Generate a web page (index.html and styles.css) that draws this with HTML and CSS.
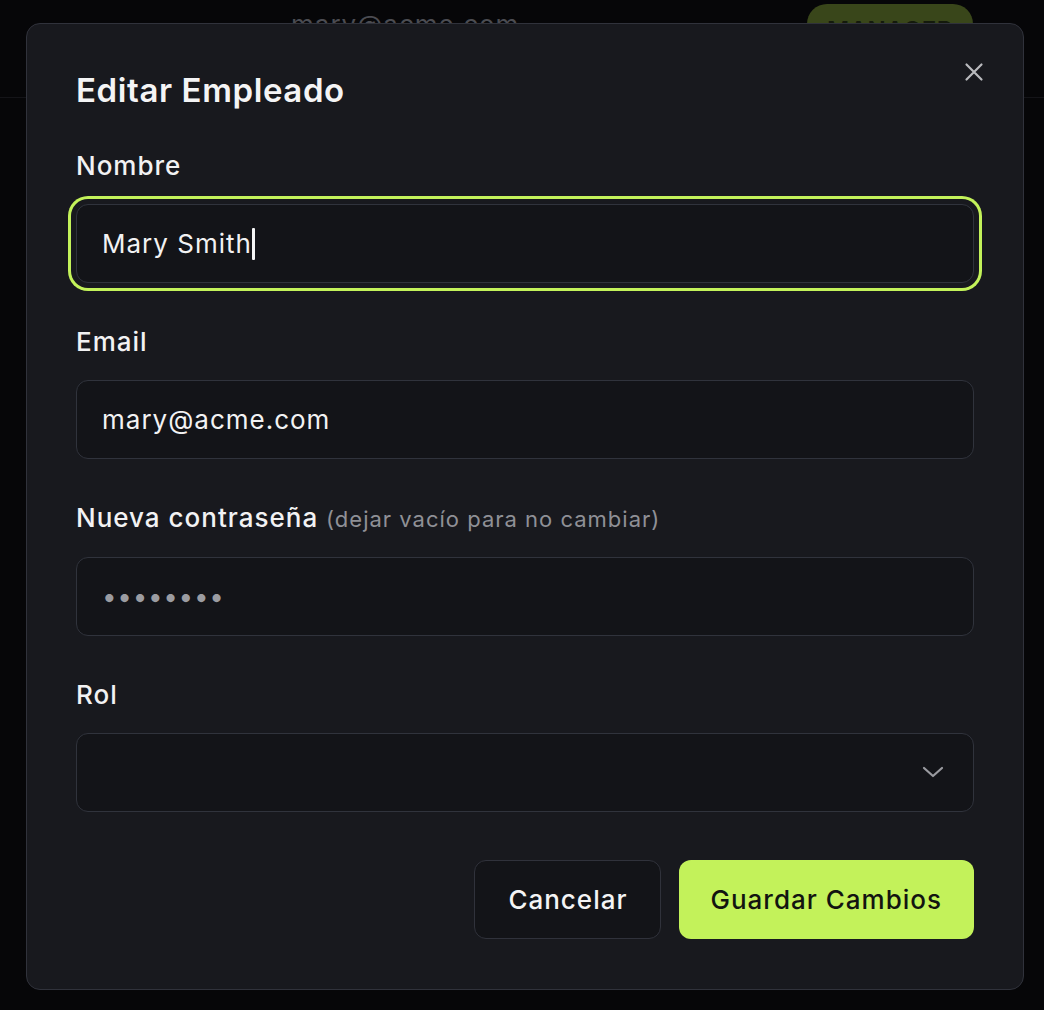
FILE: index.html
```html
<!DOCTYPE html>
<html lang="es">
<head>
<meta charset="UTF-8" />
<meta name="viewport" content="width=device-width, initial-scale=1" />
<title>Editar Empleado</title>
<link rel="stylesheet" href="styles.css">
</head>
<body>

<div class="page-behind">
  <div class="row">
    <span class="row-email">mary@acme.com</span>
    <span class="role-badge">MANAGER</span>
  </div>
</div>

<div class="overlay">
  <form class="modal" id="editForm">
    <button type="button" class="close-btn" aria-label="Cerrar">
      <svg width="24" height="24" viewBox="0 0 24 24" fill="none" stroke="currentColor" stroke-width="2.2" stroke-linecap="round">
        <path d="M4.5 4.5L19.5 19.5M19.5 4.5L4.5 19.5" />
      </svg>
    </button>

    <h1 class="modal-title">Editar Empleado</h1>

    <div class="field">
      <label for="name">Nombre</label>
      <div class="fake-input is-focused" id="name">Mary Smith<span class="caret"></span></div>
    </div>

    <div class="field">
      <label for="email">Email</label>
      <input type="email" id="email" value="mary@acme.com" />
    </div>

    <div class="field">
      <label for="password">Nueva contraseña <span class="hint">(dejar vacío para no cambiar)</span></label>
      <div class="fake-input password" id="password">••••••••</div>
    </div>

    <div class="field">
      <label for="role">Rol</label>
      <div class="select-wrap">
        <select id="role">
          <option value=""></option>
          <option value="employee">Empleado</option>
          <option value="manager">Manager</option>
        </select>
        <svg class="chevron" width="22" height="12" viewBox="0 0 22 12" fill="none" stroke="currentColor" stroke-width="2.2" stroke-linecap="round" stroke-linejoin="round">
          <path d="M2 2L11 10L20 2" />
        </svg>
      </div>
    </div>

    <div class="actions">
      <button type="button" class="btn btn-outline">Cancelar</button>
      <button type="submit" class="btn btn-primary">Guardar Cambios</button>
    </div>
  </form>
</div>

</body>
</html>
```

FILE: styles.css
```css
* {
  box-sizing: border-box;
}
body {
  margin: 0;
  background: #060608;
  font-family: Inter, "Noto Sans", Arial, sans-serif;
  color: #f2f2f3;
  width: 1044px;
  height: 1010px;
  overflow: hidden;
}

/* table behind the dialog */
.page-behind {
  height: 98px;
  border-bottom: 1px solid #141418;
}
.row {
  display: flex;
  align-items: center;
  padding-top: 3px;
}
.row-email {
  margin-left: 291px;
  font-size: 26px;
  letter-spacing: 1px;
  color: #4b4c52;
  line-height: 40px;
  padding-top: 2px;
}
.role-badge {
  margin-left: auto;
  margin-right: 71px;
  width: 166px;
  height: 40px;
  border-radius: 20px;
  background: #39461a;
  color: #141a0c;
  font-size: 24px;
  font-weight: 600;
  letter-spacing: 0.5px;
  display: flex;
  align-items: center;
  justify-content: center;
  padding-top: 12px;
}

.overlay {
  position: absolute;
  inset: 0;
  padding: 23px 20px 0 26px;
}
.modal {
  position: relative;
  width: 998px;
  height: 967px;
  background: #18191e;
  border: 1.5px solid #30323b;
  border-radius: 14px;
  padding: 46px 49px 0 49px;
}
.close-btn {
  position: absolute;
  top: 36px;
  right: 37px;
  background: none;
  border: none;
  padding: 0;
  color: #b9babe;
  cursor: pointer;
  display: flex;
}
.modal-title {
  margin: 0 0 40px 0;
  font-size: 33px;
  line-height: 40px;
  font-weight: 600;
  letter-spacing: 0.6px;
  color: #f4f4f5;
}

.field {
  margin-bottom: 43px;
}
.field label {
  display: block;
  font-size: 26px;
  line-height: 32px;
  font-weight: 500;
  letter-spacing: 1px;
  color: #f2f2f3;
  margin-bottom: 22px;
}
.field label .hint {
  font-size: 22px;
  font-weight: 400;
  letter-spacing: 1px;
  color: #8f9096;
}

.field input,
.fake-input,
.field select {
  display: flex;
  align-items: center;
  width: 100%;
  height: 79px;
  padding: 0 25px;
  background: #131418;
  border: 1.5px solid #30333c;
  border-radius: 12px;
  color: #f2f2f3;
  font-family: inherit;
  font-size: 26px;
  letter-spacing: 1px;
  outline: none;
}
.fake-input.is-focused {
  box-shadow: 0 0 0 5px #18191e, 0 0 0 8px #c3f25a;
}
.caret {
  display: inline-block;
  width: 3px;
  height: 32px;
  background: #f4f4f5;
  border-radius: 1px;
}
.fake-input.password {
  color: #9b9ca1;
  font-size: 26px;
  letter-spacing: 0.7px;
  padding-left: 25px;
}

.select-wrap {
  position: relative;
}
.field select {
  appearance: none;
  -webkit-appearance: none;
}
.chevron {
  position: absolute;
  right: 30px;
  top: 33px;
  color: #9a9ba0;
  pointer-events: none;
}

.actions {
  display: flex;
  justify-content: flex-end;
  gap: 18px;
  margin-top: 48px;
}
.btn {
  height: 79px;
  border-radius: 12px;
  font-family: inherit;
  font-size: 26px;
  font-weight: 500;
  letter-spacing: 1px;
  cursor: pointer;
}
.btn-outline {
  background: #131418;
  color: #f4f4f5;
  border: 1.5px solid #30323b;
  padding: 0 32px 0 33px;
}
.btn-primary {
  background: #c3f25a;
  color: #121410;
  border: none;
  padding: 0 32px;
}
```
